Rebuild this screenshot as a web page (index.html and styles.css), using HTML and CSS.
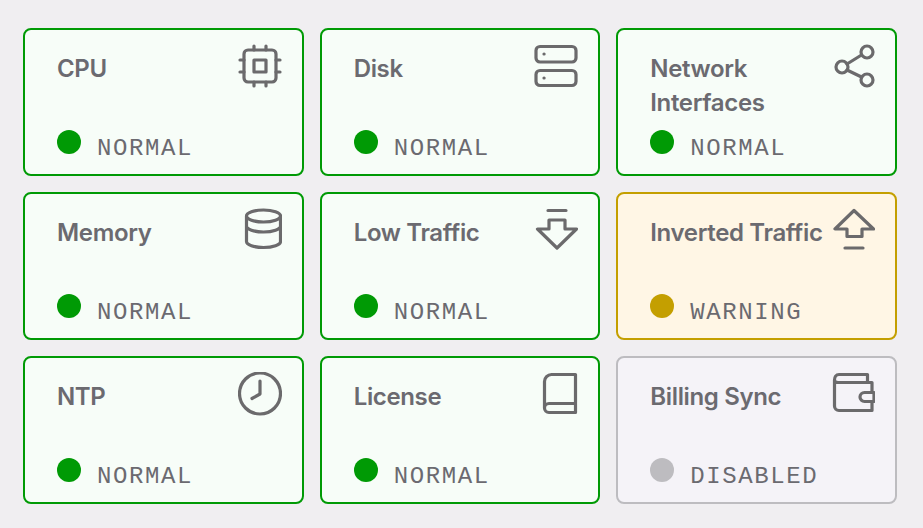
FILE: index.html
```html
<!DOCTYPE html>
<html lang="en">
<head>
<meta charset="utf-8">
<title>Status</title>
<link rel="stylesheet" href="styles.css">
</head>
<body>
<main class="grid">
  <section class="card ok">
    <div class="top"><h2 class="title">CPU</h2>
      <svg class="icon" viewBox="0 0 44 44"><rect x="6" y="6" width="32" height="32" rx="4"/><rect x="16" y="16" width="12" height="12"/><path d="M16 2v4M28 2v4M16 38v4M28 38v4M2 16h4M2 28h4M38 16h4M38 28h4"/></svg></div>
    <div class="status"><span class="dot"></span><span class="label">NORMAL</span></div>
  </section>
  <section class="card ok">
    <div class="top"><h2 class="title">Disk</h2>
      <svg class="icon" viewBox="0 0 44 44"><rect x="2" y="2.500" width="40" height="15.500" rx="4"/><rect x="2" y="26.500" width="40" height="15" rx="4"/><path class="fine" d="M10 10h.1M10 34h.1"/></svg></div>
    <div class="status"><span class="dot"></span><span class="label">NORMAL</span></div>
  </section>
  <section class="card ok">
    <div class="top"><h2 class="title">Network Interfaces</h2>
      <svg class="icon" viewBox="0 0 44 44"><circle cx="36" cy="8" r="6"/><circle cx="11" cy="23" r="6"/><circle cx="36" cy="36" r="6"/><path d="M16 20 30.500 11M16 26 30.500 33"/></svg></div>
    <div class="status"><span class="dot"></span><span class="label">NORMAL</span></div>
  </section>
  <section class="card ok">
    <div class="top"><h2 class="title">Memory</h2>
      <svg class="icon" viewBox="0 0 44 44"><ellipse cx="25.500" cy="8" rx="17" ry="6"/><path d="M8.500 8v25.500c0 3.300 7.500 6 17 6s17-2.700 17-6V8M8.500 18c0 3.300 7.500 6 17 6s17-2.700 17-6"/></svg></div>
    <div class="status"><span class="dot"></span><span class="label">NORMAL</span></div>
  </section>
  <section class="card ok">
    <div class="top"><h2 class="title">Low Traffic</h2>
      <svg class="icon" viewBox="0 0 44 44"><path d="M14 2.500h18M15 21v-9h16v9h11.500L23 40 3.500 21z"/></svg></div>
    <div class="status"><span class="dot"></span><span class="label">NORMAL</span></div>
  </section>
  <section class="card warn">
    <div class="top"><h2 class="title">Inverted Traffic</h2>
      <svg class="icon" viewBox="0 0 44 44"><path d="M14 40h18M16 21v7.500h15V21h11.500L23 2.500 4 21z"/></svg></div>
    <div class="status"><span class="dot"></span><span class="label">WARNING</span></div>
  </section>
  <section class="card ok">
    <div class="top"><h2 class="title">NTP</h2>
      <svg class="icon" viewBox="0 0 44 44"><circle cx="22" cy="21.500" r="20.500"/><path d="M22 9v13l-8 4.500"/></svg></div>
    <div class="status"><span class="dot"></span><span class="label">NORMAL</span></div>
  </section>
  <section class="card ok">
    <div class="top"><h2 class="title">License</h2>
      <svg class="icon" viewBox="0 0 44 44"><path d="M41.500 31.500H15a4.500 4.500 0 0 0 0 9h26.500v-38h-24a7 7 0 0 0-7 7V36"/></svg></div>
    <div class="status"><span class="dot"></span><span class="label">NORMAL</span></div>
  </section>
  <section class="card off">
    <div class="top"><h2 class="title">Billing Sync</h2>
      <svg class="icon" viewBox="0 0 44 44"><path d="M3.500 8c0-3 1.500-5.500 4.500-5.500h28.500V10M3.500 8c0 1.500 1.500 2.500 4 2.500H41v10M41 29.500V38.500H8A4.500 4.500 0 0 1 3.500 34V8"/><path d="M43 20.500h-9.500a4.500 4.500 0 0 0 0 9H43z"/></svg></div>
    <div class="status"><span class="dot"></span><span class="label">DISABLED</span></div>
  </section>
</main>
</body>
</html>
```
FILE: styles.css
```css
* { box-sizing: border-box; }
html, body { height: 100%; }
body {
  margin: 0;
  padding: 28px 26px 24px 23px;
  background: #f0eef1;
  font-family: "Inter", "Liberation Sans", sans-serif;
  color: #6b6a70;
}
.grid {
  display: grid;
  grid-template-columns: repeat(3, 1fr);
  grid-auto-rows: 148px;
  gap: 16px;
}
.card {
  display: flex;
  flex-direction: column;
  justify-content: space-between;
  border: 2px solid;
  border-radius: 8px;
  padding: 14px 20px 10px 32px;
}
.ok { background: #f7fdf8; border-color: #009a05; }
.ok .dot { background: #009a05; }
.warn { background: #fff6e5; border-color: #c49f00; }
.warn .dot { background: #c49f00; }
.off { background: #f5f3f8; border-color: #bdbcc0; }
.off .dot { background: #bdbcc0; }
.top {
  display: flex;
  justify-content: space-between;
  align-items: flex-start;
}
.title {
  margin: 8px 0 0;
  max-width: 176px;
  font-size: 24px;
  line-height: 34px;
  font-weight: 600;
  letter-spacing: -0.35px;
}
.icon {
  flex: none;
  width: 44px;
  height: 44px;
  fill: none;
  stroke: #6b6a6c;
  stroke-width: 3.2;
  stroke-linecap: round;
  stroke-linejoin: round;
}
.status { display: flex; align-items: flex-start; gap: 16px; }
.dot { width: 24px; height: 24px; border-radius: 50%; flex: none; }
.label {
  margin-top: 4px;
  font-family: "Liberation Mono", monospace;
  font-size: 24px;
  line-height: 30px;
  letter-spacing: 1.6px;
}
```
